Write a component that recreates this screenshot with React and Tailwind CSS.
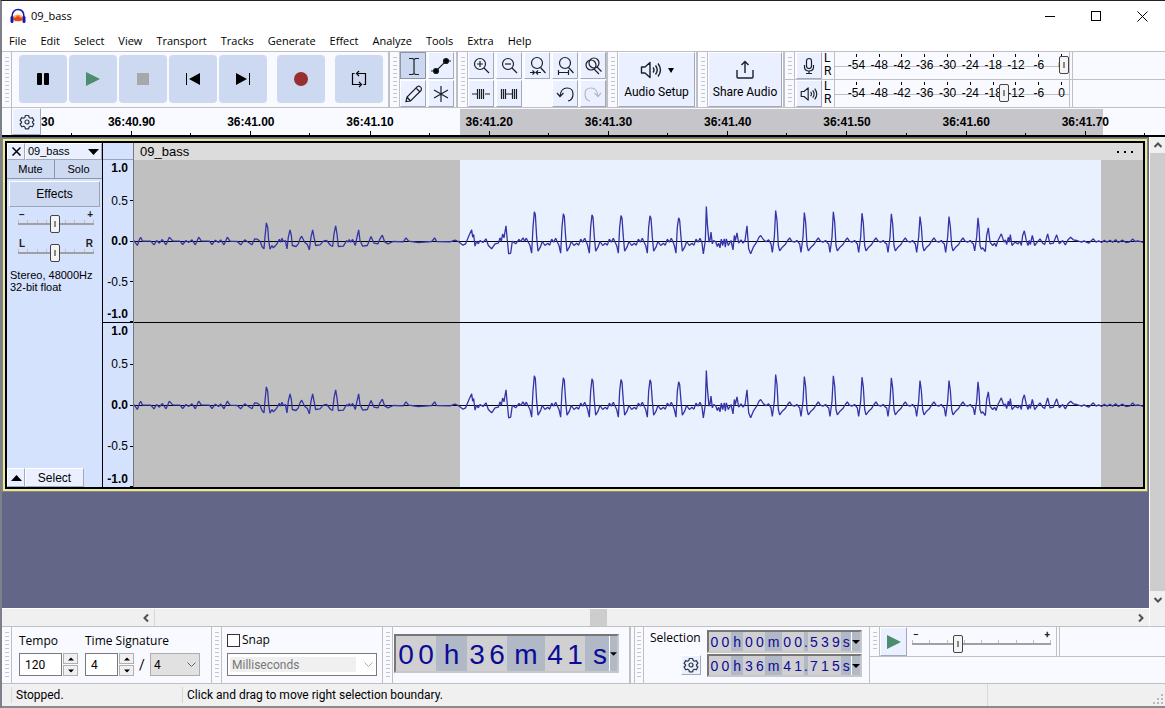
import React, { useState } from "react";

const MENUS = [
  "File",
  "Edit",
  "Select",
  "View",
  "Transport",
  "Tracks",
  "Generate",
  "Effect",
  "Analyze",
  "Tools",
  "Extra",
  "Help",
];

const TIMES = [
  "36:40.90",
  "36:41.00",
  "36:41.10",
  "36:41.20",
  "36:41.30",
  "36:41.40",
  "36:41.50",
  "36:41.60",
  "36:41.70",
];

const DECIBELS = ["-54", "-48", "-42", "-36", "-30", "-24", "-18", "-12", "-6", "0"];

const LEVELS = ["1.0", "0.5", "0.0", "-0.5", "-1.0"];

const raised =
  "flex items-center justify-center bg-[#eaf0ff] border border-t-white border-l-white border-r-[#a3a9b8] border-b-[#a3a9b8]";

const thumb =
  "appearance-none bg-transparent [&::-webkit-slider-thumb]:appearance-none [&::-webkit-slider-thumb]:w-[10px] [&::-webkit-slider-thumb]:h-[18px] [&::-webkit-slider-thumb]:rounded-[2px] [&::-webkit-slider-thumb]:border [&::-webkit-slider-thumb]:border-[#444] [&::-webkit-slider-thumb]:bg-[#f4f4f4] [&::-webkit-slider-thumb]:bg-[linear-gradient(#888,#888)] [&::-webkit-slider-thumb]:bg-[length:2px_6px] [&::-webkit-slider-thumb]:bg-center [&::-webkit-slider-thumb]:bg-no-repeat";

// ---- Waveform ----

const MID = 153;
const UNITS = 3; // data units per pixel

const QUIET = [
  [12, 150], [22, 165], [28, 148], [32, 140], [38, 152], [62, 152], [72, 163], [80, 150], [88, 158],
  [97, 147], [108, 163], [118, 140], [128, 151], [150, 152], [158, 162], [168, 150], [176, 156],
  [186, 148], [196, 163], [206, 140], [214, 151], [238, 152], [246, 162], [256, 149], [266, 156],
  [272, 148], [282, 163], [292, 140], [300, 152], [322, 153], [332, 163], [344, 148], [356, 156],
  [366, 163], [374, 145], [382, 146], [390, 152], [396, 168], [402, 175], [404, 150], [409, 97],
  [413, 110], [416, 150], [420, 176], [426, 165], [430, 172], [436, 166], [442, 158], [448, 146],
  [452, 155], [456, 143], [460, 153], [466, 150], [471, 175], [475, 140], [480, 118], [484, 135],
  [487, 165], [498, 168], [505, 160], [510, 145], [515, 137], [524, 155], [532, 162], [538, 178],
  [543, 140], [548, 118], [552, 140], [557, 165], [570, 163], [580, 152], [590, 150], [602, 165],
  [608, 168], [612, 130], [617, 106], [621, 130], [625, 168], [640, 167], [650, 150], [654, 155],
  [658, 147], [662, 155], [668, 147], [676, 165], [681, 140], [686, 118], [690, 150], [698, 167],
  [712, 165], [723, 138], [732, 158], [744, 160], [750, 145], [757, 134], [764, 154], [774, 160],
  [790, 153], [820, 154], [828, 142], [836, 152], [864, 156], [905, 153], [914, 142], [920, 153],
  [960, 154], [975, 149], [985, 153], [999, 164], [1007, 160], [1017, 135], [1025, 118],
  [1028, 140], [1031, 132], [1035, 167], [1040, 152], [1045, 160], [1050, 150], [1059, 156],
  [1068, 145], [1075, 165], [1085, 175], [1095, 160], [1105, 158], [1110, 142], [1114, 152],
  [1118, 130], [1122, 142], [1126, 118], [1128, 106], [1132, 150], [1136, 190], [1142, 188],
  [1147, 152], [1157, 160], [1167, 147], [1172, 153], [1179, 142], [1184, 152], [1189, 143],
];

const BURST = [
  [1732, 100], [1737, 155], [1740, 148], [1743, 125], [1747, 160], [1751, 150], [1757, 154],
  [1762, 168], [1766, 158], [1770, 172], [1774, 146], [1778, 165], [1783, 145], [1786, 170],
  [1789, 145], [1795, 165], [1803, 150], [1809, 178], [1813, 135], [1816, 150], [1821, 127],
  [1826, 158], [1833, 148], [1839, 158], [1845, 150], [1851, 106], [1856, 175], [1862, 190],
  [1870, 170], [1880, 155], [1887, 140], [1892, 135], [1900, 147], [1908, 154], [1916, 148],
];

const DECAY = [
  [2550, 165], [2554, 176], [2558, 172], [2566, 183], [2570, 135], [2575, 112], [2580, 155],
  [2588, 165], [2594, 158], [2598, 168], [2604, 150], [2614, 130], [2622, 155], [2626, 148],
  [2630, 162], [2635, 140], [2638, 155], [2641, 132], [2646, 165], [2655, 155], [2664, 160],
  [2670, 152], [2674, 165], [2678, 135], [2683, 121], [2689, 150], [2694, 165], [2698, 150],
  [2701, 162], [2707, 135], [2714, 165], [2722, 155], [2730, 145], [2738, 158], [2744, 162],
  [2753, 130], [2760, 160], [2770, 158], [2780, 133], [2788, 160], [2798, 150], [2806, 163],
  [2814, 148], [2822, 140], [2830, 148], [2840, 150], [2855, 155], [2862, 151], [2868, 154],
  [2876, 158], [2890, 145], [2898, 155], [2906, 151], [2915, 156], [2923, 149], [2931, 155],
  [2940, 149], [2948, 155], [2957, 148], [2965, 156], [2977, 149], [2988, 156], [3000, 154],
  [3008, 145], [3015, 153], [3024, 151], [3040, 156],
];

const EARLY = [[1213, 64], [1300, 70], [1386, 73], [1473, 75], [1560, 76], [1646, 82]];
const LATE = [[1937, 60], [2023, 66], [2110, 64], [2196, 68], [2284, 70], [2370, 78], [2457, 78]];

const earlyPulse = ([x, peak]) => [
  [x - 13, 165], [x - 8, 188], [x - 4, 110], [x, peak], [x + 3, peak + 8], [x + 7, 140],
  [x + 11, 182], [x + 18, 170], [x + 24, 153], [x + 32, 165], [x + 40, 158], [x + 46, 164],
  [x + 52, 146], [x + 58, 155], [x + 64, 143], [x + 70, 157],
];

const latePulse = ([x, peak]) => [
  [x - 14, 160], [x - 10, 186], [x - 4, 140], [x, peak], [x + 4, peak + 30], [x + 8, 165],
  [x + 12, 181], [x + 20, 170], [x + 28, 163], [x + 36, 150], [x + 42, 142], [x + 48, 152],
  [x + 56, 155], [x + 64, 150], [x + 70, 158],
];

const SAMPLES = [
  ...QUIET,
  ...EARLY.flatMap(earlyPulse),
  [1720, 190], [1726, 150], [1729, 48],
  ...BURST,
  ...LATE.flatMap(latePulse),
  [2530, 160], [2534, 181], [2540, 140], [2544, 82], [2547, 110],
  ...DECAY,
];

const wavePath = (zero) =>
  "M" + SAMPLES.map(([x, y]) => `${(x - 12) / UNITS} ${zero + (y - MID) / UNITS}`).join("L");

const Waveform = ({ height, zero }) => (
  <svg width="1012" height={height} className="block bg-[#c0c0c0]">
    <rect x="326" width="641" height={height} fill="#e9f1ff" />
    <path d={`M0 ${zero + 0.5}H1012`} stroke="#000" shapeRendering="crispEdges" />
    <path d={wavePath(zero + 0.5)} fill="none" stroke="#3434a6" strokeWidth="1.3" strokeLinejoin="bevel" />
  </svg>
);

const LevelRuler = () => (
  <div className="grid h-full grid-rows-[1fr_2fr_2fr_2fr_1fr] text-xs leading-4">
    {LEVELS.map((level, i) => (
      <div
        key={level}
        className={`flex justify-end gap-[2px] ${i === 0 ? "items-start" : i === 4 ? "items-end" : "items-center"} ${
          i % 2 === 0 ? "font-bold" : ""
        }`}
      >
        {level}
        <span className={`h-px w-[3px] ${i === 0 ? "" : "bg-black"}`} />
      </div>
    ))}
  </div>
);

// ---- Small parts ----

const Grabber = ({ className = "" }) => (
  <div className={`flex w-[10px] shrink-0 justify-center border-r border-[#c0c0c4] py-[5px] ${className}`}>
    <div className="w-[4px] bg-[repeating-linear-gradient(#c3c5cc_0px,#c3c5cc_1px,transparent_1px,transparent_4px)]" />
  </div>
);

const TransportButton = ({ label, children }) => (
  <button aria-label={label} className="flex size-12 items-center justify-center rounded-[4px] bg-[#cdd9f1]">
    <svg width="24" height="24" fill="none" stroke="none">
      {children}
    </svg>
  </button>
);

const ToolButton = ({ label, active, children }) => (
  <button
    aria-label={label}
    className={
      active
        ? "flex h-[27px] w-[26px] items-center justify-center border border-[#8d95a8] bg-[#cbd8f0]"
        : `${raised} h-[27px] w-[26px]`
    }
  >
    <svg width="22" height="22" fill="none" stroke="#1c2026" strokeWidth="1.2" className="shrink-0">
      {children}
    </svg>
  </button>
);

const Gear = () => (
  <svg width="16" height="16" viewBox="0 0 16 16" fill="none" stroke="#2f353d" strokeWidth="1.2" strokeLinejoin="round">
    <path d="M6.4 1.5h3.2l.5 1.9 1.3.8 1.9-.6 1.6 2.8-1.4 1.3v1l1.4 1.3-1.6 2.8-1.9-.6-1.3.8-.5 1.9H6.4l-.5-1.9-1.3-.8-1.9.6L1.1 10l1.4-1.3v-1L1.1 6.4l1.6-2.8 1.9.6 1.3-.8z" />
    <circle cx="8" cy="8" r="2" />
  </svg>
);

const Lens = ({ children }) => (
  <>
    <circle cx="10" cy="9" r="5.5" />
    <path d="M14 13l5 5" />
    {children}
  </>
);

const Speaker = ({ width }) => (
  <svg width={width} height={width} viewBox="0 0 22 22" fill="none" stroke="#1c2026" strokeWidth="1.4" strokeLinejoin="round">
    <path d="M1.5 8v6h3.5l5 4.5v-15L5 8z" />
    <path d="M13 8.5q2 2.500 0 5M15.500 6.500q3.500 4.500 0 9M18 4.500q5 6.500 0 13" />
  </svg>
);

const Chevron = ({ d }) => (
  <svg width="10" height="10" fill="none" stroke="#505050" strokeWidth="2" className="shrink-0">
    <path d={d} />
  </svg>
);

const Triangle = ({ up, className = "" }) => (
  <svg width="8" height="4" viewBox="0 0 8 4" className={className}>
    <path d={up ? "M0 4L4 0l4 4z" : "M0 0h8L4 4z"} fill="#000" />
  </svg>
);

const Meter = ({ label, value, icon }) => (
  <div className="flex h-[27px]">
    <Grabber />
    <button aria-label={label} className={`${raised} ml-px w-[26px]`}>
      {icon}
    </button>
    <div className="w-[12px] pl-[2px] text-xs leading-[13px]">
      <div>L</div>
      <div>R</div>
    </div>
    <div className="relative w-[236px] border-x border-[#c0c0c4] pl-[10px] font-['Liberation_Sans',sans-serif]">
      <div className="absolute inset-x-0 top-[14px] h-px bg-[#c0c0c4]" />
      <div className="relative flex h-full w-[228px]">
        {DECIBELS.map((db) => (
          <div key={db} className="flex h-full flex-1 flex-col items-center">
            <span className="mt-[2px] h-[3px] w-px bg-black" />
            <span className="text-xs leading-4">{db}</span>
          </div>
        ))}
      </div>
      <input
        type="range"
        aria-label={label}
        defaultValue={value}
        className={`${thumb} absolute inset-x-0 top-[4px] h-[18px]`}
      />
    </div>
    <div className="w-[3px] border-r border-[#c0c0c4]" />
  </div>
);

const Slider = ({ label, left, right, value }) => (
  <div className="relative h-[29px]">
    <div className="flex justify-between px-px text-[10px] leading-[10px] font-bold text-[#222]">
      <span>{left}</span>
      <span>{right}</span>
    </div>
    <div className="flex h-[5px] justify-between border-b-2 border-[#a0a0a0]">
      {[0, 1, 2, 3, 4, 5, 6, 7, 8].map((tick) => (
        <span key={tick} className="w-px bg-[#c0c0c0]" />
      ))}
    </div>
    <input
      type="range"
      aria-label={label}
      defaultValue={value}
      className={`${thumb} absolute inset-x-0 top-[5px] h-[18px] w-full`}
    />
  </div>
);

const Spinner = ({ label }) => (
  <div className="ml-px flex w-[15px] flex-col gap-px">
    <button
      aria-label={`Increase ${label}`}
      className="flex h-[11px] items-center justify-center border border-[#b0b0b0] bg-[#f0f0f0]"
    >
      <Triangle up className="w-[6px]" />
    </button>
    <button
      aria-label={`Decrease ${label}`}
      className="flex h-[11px] items-center justify-center border border-[#b0b0b0] bg-[#f0f0f0]"
    >
      <Triangle className="w-[6px]" />
    </button>
  </div>
);

const SelectionTime = ({ label, groups }) => (
  <div
    role="group"
    aria-label={label}
    className="flex h-[23px] w-[155px] border-2 border-t-[#777] border-r-[#c8c8c8] border-b-[#c8c8c8] border-l-[#777] bg-[#b1b8c6] text-sm leading-5 text-[#0b0b96]"
  >
    {groups.map(([digits, unit, unitWidth], g) => (
      <React.Fragment key={g}>
        <span className="flex bg-[#d0d0d2]">
          {digits.split("").map((digit, i) => (
            <span key={i} className="w-[11px] text-center">
              {digit}
            </span>
          ))}
        </span>
        <span className={`${unitWidth} text-center`}>{unit}</span>
      </React.Fragment>
    ))}
    <button aria-label={`${label} format`} className="flex flex-1 items-center justify-center border-l border-white">
      <Triangle />
    </button>
  </div>
);

// ---- Sections ----

const TitleBar = () => (
  <header className="flex h-[30px] items-center bg-white pl-2">
    <svg width="16" height="16" viewBox="0 0 16 16">
      <path d="M3 12V8q5-3 10 0v4q-5 3-10 0z" fill="#ffb84d" />
      <path d="M3.500 11l1.500-2 1 1 1-3 1 2 1-2 1 3 1-1 1.500 2-1.500 2h-6z" fill="#e8401c" />
      <path d="M2 9C2 3.500 5 1.500 8 1.500S14 3.500 14 9" fill="none" stroke="#1717b5" strokeWidth="1.6" />
      <rect x="0.5" y="8" width="3" height="7" rx="1.500" fill="#1717b5" />
      <rect x="12.500" y="8" width="3" height="7" rx="1.500" fill="#1717b5" />
    </svg>
    <h1 className="ml-[5px] font-['Open_Sans',sans-serif] text-[11px]">09_bass</h1>
    <div className="ml-auto flex">
      <button aria-label="Minimize" className="flex w-[46px] justify-center">
        <svg width="11" height="11" stroke="#000" shapeRendering="crispEdges">
          <path d="M0 5.500h10" />
        </svg>
      </button>
      <button aria-label="Maximize" className="flex w-[46px] justify-center">
        <svg width="11" height="11" stroke="#000" fill="none" shapeRendering="crispEdges">
          <path d="M.5.5h9v9h-9z" />
        </svg>
      </button>
      <button aria-label="Close" className="flex w-[46px] justify-center">
        <svg width="11" height="11" stroke="#000">
          <path d="M.5.5l10 10M10.500.5l-10 10" />
        </svg>
      </button>
    </div>
  </header>
);

const TopToolbars = () => (
  <div className="flex h-[57px] border-y border-[#c0c0c4]">
    <Grabber />
    <div className="flex gap-[2px] border-r-2 border-[#c0c0c4] pt-[3px] pr-[5px] pl-[7px]">
      <TransportButton label="Pause">
        <rect x="6" y="6" width="5" height="12" rx="1" fill="#000" />
        <rect x="13" y="6" width="5" height="12" rx="1" fill="#000" />
      </TransportButton>
      <TransportButton label="Play">
        <path d="M5 5v14l14-7z" fill="#4b8d6d" />
      </TransportButton>
      <TransportButton label="Stop">
        <rect x="6" y="6" width="12" height="12" fill="#a6a8ac" />
      </TransportButton>
      <TransportButton label="Skip to start">
        <path d="M5 6h1v12H5zM19 6v12L8 12z" fill="#000" />
      </TransportButton>
      <TransportButton label="Skip to end">
        <path d="M18 6h1v12h-1zM5 6v12l11-6z" fill="#000" />
      </TransportButton>
      <div className="px-2">
        <TransportButton label="Record">
          <circle cx="12" cy="12" r="7" fill="#95302f" />
        </TransportButton>
      </div>
      <TransportButton label="Loop">
        <path
          d="M7.500 6.500h-2v11h8M12 15l2.500 2.500L12 20M16.500 17.500h2v-11h-8M12 4L9.500 6.500 12 9"
          stroke="#000"
          strokeWidth="1.2"
        />
      </TransportButton>
    </div>

    <Grabber />
    <div className="grid grid-cols-[26px_26px] gap-x-[2px] gap-y-px border-r-2 border-[#c0c0c4] pr-[2px]">
      <ToolButton label="Selection tool" active>
        <path d="M7 3.500h3.500L12 4.500l1.500-1H17M12 4.500v14M7 19.500h3.500l1.500-1 1.500 1H17" />
      </ToolButton>
      <ToolButton label="Envelope tool">
        <path d="M1 16h5l10-10h5" />
        <circle cx="6" cy="16" r="2.500" fill="#000" />
        <circle cx="16" cy="6" r="2.500" fill="#000" />
      </ToolButton>
      <ToolButton label="Draw tool">
        <path d="M4 18.500l1-4.500L15.500 3.500q2-1 3.500 1 1 1.500 0 3L8.500 18zM14 5l4 4M5 14l3.500 4" />
      </ToolButton>
      <ToolButton label="Multi-tool">
        <path d="M11 3v16M4 7l14 8M18 7L4 15" />
      </ToolButton>
    </div>

    <Grabber />
    <div className="grid grid-cols-[26px_26px_26px_26px_26px] gap-x-[2px] gap-y-px border-r-2 border-[#c0c0c4]">
      <ToolButton label="Zoom in">
        <Lens>
          <path d="M7 9h6M10 6v6" />
        </Lens>
      </ToolButton>
      <ToolButton label="Zoom out">
        <Lens>
          <path d="M7 9h6" />
        </Lens>
      </ToolButton>
      <ToolButton label="Fit selection to width">
        <circle cx="11" cy="8" r="5.500" />
        <path d="M14.500 12.500l5 5.500M4 17.500h4.500M10 17.500h5M6.500 15.500l2 2-2 2M12 15.500l-2 2 2 2" />
      </ToolButton>
      <ToolButton label="Fit project to width">
        <circle cx="11" cy="8" r="5.500" />
        <path d="M14.500 12.500l5 5.500M4.500 15v5M14.500 15v5M4.500 17.500h10" />
      </ToolButton>
      <ToolButton label="Zoom toggle">
        <circle cx="9" cy="10" r="5" />
        <circle cx="12" cy="8" r="5" />
        <path d="M12 14l5 5M15 12l4.500 4.500" />
      </ToolButton>
      <ToolButton label="Trim audio outside selection">
        <path d="M2 11h5M15 11h5M7.500 6v10M9.500 6v10M11.500 6v10M13.500 6v10" />
      </ToolButton>
      <ToolButton label="Silence audio selection">
        <path d="M3.500 6v10M5.500 6v10M7.500 6v10M8 11h6M14.500 6v10M16.500 6v10M18.500 6v10" />
      </ToolButton>
      <span />
      <ToolButton label="Undo">
        <path d="M6 13Q7 5 13 5t6 6-5 7M3 10l3 3.500L9.500 10" />
      </ToolButton>
      <ToolButton label="Redo">
        <path d="M16 13Q15 5 9 5T3 11t5 7M19 10l-3 3.500L12.500 10" stroke="#b3b8c2" />
      </ToolButton>
    </div>

    <Grabber />
    <div className="border-r-2 border-[#c0c0c4] pr-px">
      <button className={`${raised} h-full w-[77px] flex-col gap-[3px] text-xs`}>
        <span className="flex items-center gap-[6px]">
          <Speaker width={22} />
          <svg width="6" height="5">
            <path d="M0 0h6L3 5z" />
          </svg>
        </span>
        <span className="leading-4 whitespace-nowrap">Audio Setup</span>
      </button>
    </div>

    <Grabber />
    <div className="border-r-2 border-[#c0c0c4] pr-px">
      <button className={`${raised} h-full w-[74px] flex-col gap-[3px] text-xs`}>
        <svg width="22" height="22" fill="none" stroke="#1c2026" strokeWidth="1.400">
          <path d="M3 11v7q0 1 1 1h14q1 0 1-1v-7M11 14V3M7.500 6L11 2.500 14.500 6" />
        </svg>
        <span className="leading-4 whitespace-nowrap">Share Audio</span>
      </button>
    </div>

    <div className="flex flex-1 flex-col">
      <div className="border-b border-[#c0c0c4]">
        <Meter
          label="Recording level"
          value={100}
          icon={
            <svg width="16" height="18" fill="none" stroke="#1c2026" strokeWidth="1.2">
              <rect x="5.500" y="1.500" width="5" height="10" rx="2.500" />
              <path d="M3.500 8v2q0 4 4.500 4t4.500-4V8M8 14v2.500M5 16.500h6" />
            </svg>
          }
        />
      </div>
      <Meter label="Playback level" value={73} icon={<Speaker width={18} />} />
    </div>
  </div>
);

const Timeline = () => (
  <div className="flex h-[29px] border-b-2 border-black font-['Liberation_Sans',sans-serif]">
    <div className="w-[10px] border-r border-[#c0c0c4]" />
    <button aria-label="Timeline options" className={`${raised} w-[29px]`}>
      <Gear />
    </button>
    <div className="relative flex-1">
      <div className="absolute inset-y-0 right-[62px] left-[419px] mt-px bg-[#c5c5ca]" />
      <div className="relative mr-5 flex h-full">
        <div className="flex w-[31px] flex-col justify-between pt-[5px]">
          <span className="text-xs leading-[18px] font-bold">30</span>
          <span className="h-[2px] w-px self-end bg-black" />
        </div>
        {TIMES.map((time) => (
          <div key={time} className="flex flex-1 flex-col items-center justify-between pt-[5px]">
            <span className="text-xs leading-[18px] font-bold">{time}</span>
            <span className="flex h-[4px] w-full items-end justify-between">
              <span />
              <span className="ml-px h-[4px] w-px bg-black" />
              <span className="h-[2px] w-px bg-black" />
            </span>
          </div>
        ))}
      </div>
    </div>
  </div>
);

const TrackPanel = () => (
  <div className="flex w-[96px] shrink-0 flex-col border-r border-black bg-[#d5e2fe] text-[11px]">
    <div className="flex h-[17px]">
      <button aria-label="Close track" className={`${raised} w-[18px]`}>
        <svg width="9" height="9" stroke="#000" strokeWidth="1.500">
          <path d="M.5.5l8 8M8.500.5l-8 8" />
        </svg>
      </button>
      <button className={`${raised} flex-1 px-[2px]`}>
        <span className="mr-auto">09_bass</span>
        <svg width="11" height="6">
          <path d="M0 0h11L5.500 6z" />
        </svg>
      </button>
    </div>
    <div className="flex h-[19px]">
      <button className="flex-1 border-r border-b border-[#8d95a8] bg-[#cdd9f1]">Mute</button>
      <button className="flex-1 border-b border-[#8d95a8] bg-[#cdd9f1]">Solo</button>
    </div>
    <button className="mx-[2px] mt-[2px] h-[26px] border border-t-white border-r-[#9aa3b8] border-b-[#9aa3b8] border-l-white bg-[#cdd9f1] text-xs">
      Effects
    </button>
    <div className="mt-[3px] pr-[8px] pl-[11px]">
      <Slider label="Gain" left="−" right="+" value={48} />
      <Slider label="Pan" left="L" right="R" value={48} />
    </div>
    <p className="mt-px pl-[3px] leading-3 whitespace-nowrap">
      Stereo, 48000Hz
      <br />
      32-bit float
    </p>
    <div className="mt-auto flex h-[19px]">
      <button aria-label="Collapse track" className={`${raised} w-[18px]`}>
        <svg width="11" height="6">
          <path d="M0 6h11L5.500 0z" />
        </svg>
      </button>
      <button className={`${raised} w-[59px] text-xs`}>Select</button>
    </div>
  </div>
);

const Track = () => (
  <section className="mr-px border border-[#8b8b62] bg-[#e9e7b0] p-[2px] font-['Liberation_Sans',sans-serif]">
    <div className="flex border-2 border-black">
      <TrackPanel />
      <div className="w-[31px] shrink-0 border-r border-[#777] bg-[#d5e2fe]">
        <div className="h-[17px] border-b border-[#9aa3b8]" />
        <div className="h-[163px] border-b border-black">
          <LevelRuler />
        </div>
        <div className="h-[164px]">
          <LevelRuler />
        </div>
      </div>
      <div className="w-0 flex-1 overflow-hidden bg-[#c0c0c0]">
        <div className="flex h-[17px] items-center justify-between bg-[#dcdcdc] pr-[10px] pl-[6px] text-[13px] leading-4">
          <h2>09_bass</h2>
          <svg width="16" height="4">
            <path d="M0 1h2v2H0zM7 1h2v2H7zM14 1h2v2h-2z" />
          </svg>
        </div>
        <div className="border-b border-black">
          <Waveform height={162} zero={81} />
        </div>
        <Waveform height={164} zero={82} />
      </div>
    </div>
  </section>
);

const TrackArea = () => (
  <main className="flex">
    <div className="min-w-0 flex-1">
      <div className="bg-[#636686] pt-px pb-[116px]">
        <Track />
      </div>
      <div className="flex h-[18px] items-center border-t border-white bg-[#f0f0f0] pr-[3px] pl-[139px]">
        <button aria-label="Scroll left">
          <Chevron d="M7 1.500L3.500 5 7 8.500" />
        </button>
        <div className="ml-[3px] flex h-full flex-1 border-l border-[#d8d8d8]">
          <div className="w-[44.3%]" />
          <div className="w-[17px] bg-[#cdcdcd]" />
        </div>
        <button aria-label="Scroll right">
          <Chevron d="M3 1.500L6.500 5 3 8.500" />
        </button>
      </div>
    </div>
    <div className="flex w-4 flex-col items-center border-l border-white bg-[#f0f0f0] pb-[17px]">
      <button aria-label="Scroll up" className="flex h-[16px] items-center">
        <Chevron d="M1.500 7L5 3.500 8.500 7" />
      </button>
      <div className="w-full flex-1 bg-[#cdcdcd]" />
      <button aria-label="Scroll down" className="flex h-[18px] items-center">
        <Chevron d="M1.500 3L5 6.500 8.500 3" />
      </button>
    </div>
  </main>
);

const BottomToolbars = () => {
  const [snap, setSnap] = useState(false);

  return (
    <div className="flex h-[58px] border-y border-[#c0c0c4]">
      <Grabber />
      <div className="flex border-r border-[#c0c0c4] pr-[11px] pl-[7px]">
        <div className="pt-[6px]">
          <label htmlFor="tempo" className="block font-['Open_Sans',sans-serif] text-xs leading-4">
            Tempo
          </label>
          <div className="mt-1 flex">
            <input
              id="tempo"
              defaultValue="120"
              className="h-[23px] w-[43px] border border-[#7a7a7a] bg-white pl-[5px] text-xs"
            />
            <Spinner label="tempo" />
          </div>
        </div>
        <div className="ml-[7px] pt-[6px]">
          <label htmlFor="beats" className="block font-['Open_Sans',sans-serif] text-xs leading-4">
            Time Signature
          </label>
          <div className="mt-1 flex h-[23px] items-center">
            <input
              id="beats"
              defaultValue="4"
              className="h-[23px] w-[33px] border border-[#7a7a7a] bg-white pl-[5px] text-xs"
            />
            <Spinner label="beats" />
            <span className="w-4 text-center text-sm leading-4">/</span>
            <div className="relative flex">
              <select
                aria-label="Note value"
                className="h-[23px] w-[50px] appearance-none border border-[#adadad] bg-[#e1e1e1] pl-[3px] text-xs"
              >
                <option>4</option>
              </select>
              <svg width="9" height="5" fill="none" stroke="#666" className="absolute top-[9px] right-[4px]">
                <path d="M.5.5l4 4 4-4" />
              </svg>
            </div>
          </div>
        </div>
      </div>

      <Grabber />
      <div className="border-r border-[#c0c0c4] pt-[5px] pr-[5px] pl-[5px]">
        <label className="flex items-center gap-[2px] font-['Open_Sans',sans-serif] text-xs leading-4">
          <input
            type="checkbox"
            checked={snap}
            onChange={(e) => setSnap(e.target.checked)}
            className="size-[13px] appearance-none border border-[#333] bg-white checked:bg-[#333]"
          />
          Snap
        </label>
        <div className="relative mt-[5px] flex">
          <select
            aria-label="Snap to"
            disabled
            className="h-[23px] w-[150px] appearance-none border border-[#7a7a7a] bg-white bg-[linear-gradient(#f0f0f0,#f0f0f0)] bg-[length:126px_15px] bg-[position:2px_3px] bg-no-repeat pl-[4px] text-xs text-[#777] opacity-100"
          >
            <option>Milliseconds</option>
          </select>
          <svg width="9" height="5" fill="none" stroke="#aaa" className="absolute top-[9px] right-[4px]">
            <path d="M.5.5l4 4 4-4" />
          </svg>
        </div>
      </div>

      <Grabber />
      <div className="border-r-2 border-[#c0c0c4] pt-[7px] pr-[10px] pl-px">
        <div
          role="group"
          aria-label="Audio position"
          className="flex h-[39px] border-2 border-t-[#777] border-r-[#c8c8c8] border-b-[#c8c8c8] border-l-[#777] bg-[#b1b8c6] font-['Liberation_Sans',sans-serif] text-[28px] leading-[38px] text-[#0b0b96]"
        >
          {[
            ["00", "h", "w-[31px]"],
            ["36", "m", "w-[38px]"],
            ["41", "s", "w-[24px] pl-[6px]"],
          ].map(([digits, unit, unitClass]) => (
            <React.Fragment key={unit}>
              <span className="flex bg-[#d0d0d2]">
                <span className="w-5 text-center">{digits[0]}</span>
                <span className="w-5 text-center">{digits[1]}</span>
              </span>
              <span className={`${unitClass} text-center`}>{unit}</span>
            </React.Fragment>
          ))}
          <button aria-label="Time format" className="flex w-[8px] items-center border-l border-white">
            <Triangle className="w-[7px]" />
          </button>
        </div>
      </div>

      <div className="w-[3px]" />
      <Grabber className="border-l" />
      <div className="flex border-r border-[#c0c0c4] pr-[6px] pl-[6px]">
        <div className="flex w-[57px] flex-col justify-between pt-[3px] pb-[8px]">
          <span className="font-['Open_Sans',sans-serif] text-xs leading-4">Selection</span>
          <button aria-label="Selection options" className={`${raised} mr-[6px] size-[20px] self-end`}>
            <Gear />
          </button>
        </div>
        <div className="flex flex-col gap-px pt-[3px] pr-px font-['Liberation_Sans',sans-serif]">
          <SelectionTime
            label="Selection length"
            groups={[
              ["00", "h", "w-[13px]"],
              ["00", "m", "w-[17px]"],
              ["00", ".", "w-[5px]"],
              ["539", "s", "w-[10px]"],
            ]}
          />
          <SelectionTime
            label="Selection end"
            groups={[
              ["00", "h", "w-[13px]"],
              ["36", "m", "w-[17px]"],
              ["41", ".", "w-[5px]"],
              ["715", "s", "w-[10px]"],
            ]}
          />
        </div>
      </div>

      <div className="flex-1">
        <div className="flex h-[30px] border-b border-[#c0c0c4]">
          <Grabber />
          <button aria-label="Play at speed" className={`${raised} w-[27px]`}>
            <svg width="16" height="16">
              <path d="M1 1v14l14-7z" fill="#4b8d6d" />
            </svg>
          </button>
          <div className="w-[150px] border-r border-[#c0c0c4] px-[5px] pt-[3px]">
            <Slider label="Playback speed" left="−" right="+" value={32} />
          </div>
          <div className="w-[3px] border-r border-[#c0c0c4]" />
        </div>
      </div>
    </div>
  );
};

const StatusBar = () => (
  <footer className="flex h-[24px] items-center border-b-2 border-[#8a8a8a] bg-[#f0f0f0] pl-[9px] text-xs">
    <span className="w-[171px] border-l border-[#d8d8d8] pl-[4px]">Stopped.</span>
    <span className="flex-1 border-l border-[#d8d8d8] pl-[4px]">
      Click and drag to move right selection boundary.
    </span>
    <span className="flex h-full w-[178px] items-end justify-end border-l border-[#d8d8d8] p-px">
      <svg width="11" height="11" fill="#b8b8b8">
        <path d="M8 0h2v2H8zM4 4h2v2H4zM8 4h2v2H8zM0 8h2v2H0zM4 8h2v2H4zM8 8h2v2H8z" />
      </svg>
    </span>
  </footer>
);

export default function App() {
  return (
    <div className="border-t border-l-2 border-t-[#222] border-l-[#7d8088] bg-[#f8faff] font-[Roboto,'Open_Sans',sans-serif] text-black">
      <TitleBar />
      <nav className="flex h-[20px] items-center gap-[14px] bg-white pl-[7px] font-['Open_Sans',sans-serif] text-[11px]">
        {MENUS.map((menu) => (
          <button key={menu}>{menu}</button>
        ))}
      </nav>
      <TopToolbars />
      <Timeline />
      <TrackArea />
      <BottomToolbars />
      <StatusBar />
    </div>
  );
}
